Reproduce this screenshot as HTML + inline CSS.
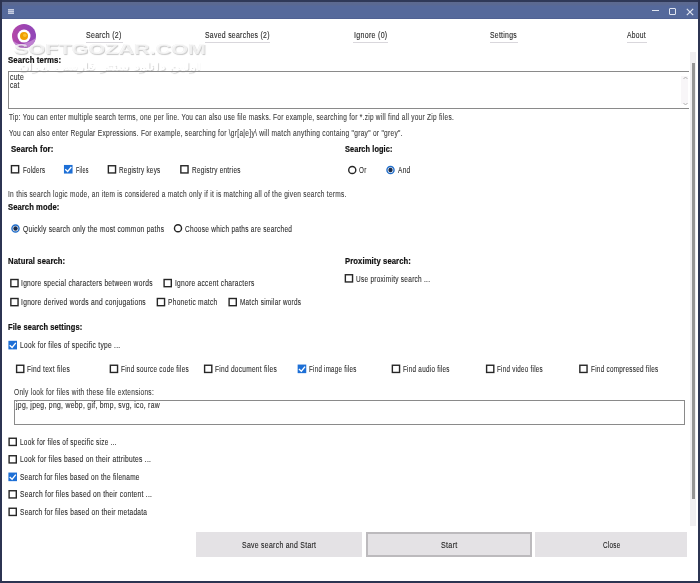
<!DOCTYPE html>
<html><head><meta charset="utf-8">
<style>
html,body{margin:0;padding:0;width:700px;height:583px;overflow:hidden;background:#fff;}
body{position:relative;font-family:"Liberation Sans",sans-serif;font-size:7.8px;}
.t{position:absolute;white-space:pre;line-height:10px;height:10px;transform-origin:0 0;font-size:8.3px;-webkit-text-stroke:0.1px currentColor;}
.cb{position:absolute;width:6.2px;height:6.2px;border:1.3px solid #2e2e2e;background:#fff;box-sizing:content-box;}
.cb.on{background:#1d6fd6;border-color:#1d6fd6;}
.cb svg{position:absolute;left:-1.3px;top:-1.3px;}
.rd{position:absolute;width:6.4px;height:6.4px;border:1.3px solid #2e2e2e;border-radius:50%;background:#fff;}
.rd.on{border-color:#1f6cc9;}
.rd i{position:absolute;left:1.6px;top:1.6px;width:3.4px;height:3.4px;border-radius:50%;background:#1f4f8a;}
.abs{position:absolute;}
</style></head><body>
<!-- window frame -->
<div class="abs" style="left:0;top:0;width:700px;height:2px;background:#2f3958"></div>
<div class="abs" style="left:0;top:2px;width:700px;height:16.5px;background:linear-gradient(#5d6a8f 0,#5a6992 2.5px,#55699b 4.5px,#55699b 15.5px,#4d5e8e 17px,#4a5a8a 18.5px)"></div>
<div class="abs" style="left:0;top:0;width:2px;height:583px;background:#2c3452"></div>
<div class="abs" style="left:697.5px;top:0;width:2.5px;height:583px;background:#2c3452"></div>
<div class="abs" style="left:0;top:580.5px;width:700px;height:2.5px;background:#2c3452"></div>
<!-- hamburger -->
<div class="abs" style="left:8px;top:8.6px;width:6px;height:5.5px;background:#c6cde0"></div>
<div class="abs" style="left:8px;top:10.3px;width:6px;height:0.7px;background:#9aa6c8"></div>
<div class="abs" style="left:8px;top:12.2px;width:6px;height:0.7px;background:#9aa6c8"></div>
<!-- window controls -->
<div class="abs" style="left:651.5px;top:10.3px;width:7px;height:1.2px;background:#e0e5f0"></div>
<div class="abs" style="left:669.2px;top:8.3px;width:4.8px;height:4.8px;border:1.1px solid #e0e5f0;border-radius:1px"></div>
<svg class="abs" style="left:686px;top:7.5px" width="8" height="8" viewBox="0 0 8 8"><path d="M0.8 0.8 L7.2 7.2 M7.2 0.8 L0.8 7.2" stroke="#e0e5f0" stroke-width="1.2"/></svg>
<!-- logo -->
<svg class="abs" style="left:11.6px;top:23.6px" width="24" height="24" viewBox="0 0 24 24">
<defs><linearGradient id="lg" x1="0" y1="0.5" x2="1" y2="0.5"><stop offset="0" stop-color="#b448a8"/><stop offset="0.5" stop-color="#9d44b2"/><stop offset="1" stop-color="#9148b8"/></linearGradient>
<clipPath id="ring"><path d="M12 0A12 12 0 1 0 12.01 0Z M12 5.6A6.5 6.5 0 1 1 11.99 5.6Z" clip-rule="evenodd"/></clipPath></defs>
<circle cx="12" cy="12" r="12" fill="url(#lg)"/>
<path d="M0 15.5 Q6 21.5 12 19.8 Q18 18 24 14 L24 24 L0 24Z" fill="#c58ad6" clip-path="url(#ring)" opacity="0.85"/>
<circle cx="12" cy="12.1" r="6.5" fill="#fff"/>
<circle cx="12" cy="12" r="4.0" fill="#f0a000"/>
<circle cx="12.8" cy="11.2" r="1.8" fill="#f8c030"/>
</svg>
<!-- watermark -->
<div class="abs" style="left:13.5px;top:40.5px;font-size:15px;font-weight:700;color:rgba(255,255,255,0.75);line-height:16px;white-space:nowrap;transform:scaleX(1.44);transform-origin:0 0;filter:blur(0.35px);text-shadow:0.6px 0.8px 0.8px rgba(0,0,0,0.22),-0.3px -0.3px 0.5px rgba(0,0,0,0.08)">SOFTGOZAR.COM</div>
<div class="abs" style="left:18px;top:60px;font-size:10px;font-weight:700;color:#fff;line-height:13px;white-space:nowrap;transform:scaleX(1.45);transform-origin:0 0;filter:blur(0.35px);text-shadow:0.5px 0.7px 0.8px rgba(0,0,0,0.18)">اولین دانلود سنتر فارسی ایران</div>
<!-- tab underlines -->
<div class="abs" style="left:85.5px;top:41.9px;width:37px;height:1px;background:#d9d7dc"></div>
<div class="abs" style="left:205px;top:41.9px;width:65px;height:1px;background:#d9d7dc"></div>
<div class="abs" style="left:353px;top:41.9px;width:35px;height:1px;background:#d9d7dc"></div>
<div class="abs" style="left:489.5px;top:41.9px;width:28px;height:1px;background:#d9d7dc"></div>
<div class="abs" style="left:627px;top:41.9px;width:19.5px;height:1px;background:#d9d7dc"></div>
<!-- search terms textarea -->
<div class="abs" style="left:8px;top:71px;width:680.5px;height:38px;border:1px solid #8a8a8a;border-right:0;box-sizing:border-box"></div>
<div class="abs" style="left:680.6px;top:76px;width:7.5px;height:28px;background:#f8f6f8"></div>
<svg class="abs" style="left:683px;top:75.5px" width="5" height="4"><path d="M0.5 3 L2.5 1 L4.5 3" stroke="#a8a8a8" fill="none" stroke-width="0.9"/></svg>
<svg class="abs" style="left:683px;top:101.5px" width="5" height="4"><path d="M0.5 1 L2.5 3 L4.5 1" stroke="#a8a8a8" fill="none" stroke-width="0.9"/></svg>
<!-- extensions textbox -->
<div class="abs" style="left:14.3px;top:400px;width:671.2px;height:24.5px;border:1px solid #8a8a8a;box-sizing:border-box"></div>
<!-- page scrollbar -->
<div class="abs" style="left:689.5px;top:52.4px;width:6.2px;height:473.4px;background:#f0eff1"></div>
<div class="abs" style="left:692.4px;top:62.6px;width:2.4px;height:436.3px;background:#959595"></div>
<!-- buttons -->
<div class="abs" style="left:195.7px;top:532px;width:166.6px;height:25.1px;background:#e4e2e5"></div>
<div class="abs" style="left:365.9px;top:532px;width:166.2px;height:25px;background:#e4e2e5;border:2px solid #bcbabd;box-sizing:border-box"></div>
<div class="abs" style="left:535.4px;top:532px;width:151.2px;height:25.3px;background:#e4e2e5"></div>
<div class="t" style="left:86.40px;top:29.92px;letter-spacing:0.35px;transform:scaleX(0.8429);color:#2a2a2a;-webkit-text-stroke:0.12px #2a2a2a">Search (2)</div>
<div class="t" style="left:205.00px;top:29.92px;letter-spacing:0.35px;transform:scaleX(0.8281);color:#2a2a2a;-webkit-text-stroke:0.12px #2a2a2a">Saved searches (2)</div>
<div class="t" style="left:353.50px;top:29.92px;letter-spacing:0.35px;transform:scaleX(0.8484);color:#2a2a2a;-webkit-text-stroke:0.12px #2a2a2a">Ignore (0)</div>
<div class="t" style="left:489.90px;top:29.92px;letter-spacing:0.35px;transform:scaleX(0.8236);color:#2a2a2a;-webkit-text-stroke:0.12px #2a2a2a">Settings</div>
<div class="t" style="left:627.00px;top:29.92px;letter-spacing:0.35px;transform:scaleX(0.8107);color:#2a2a2a;-webkit-text-stroke:0.12px #2a2a2a">About</div>
<div class="t" style="left:7.80px;top:55.02px;letter-spacing:0.1px;transform:scaleX(0.9393);font-weight:700;color:#111;-webkit-text-stroke:0.2px #111">Search terms:</div>
<div class="t" style="left:9.80px;top:72.32px;letter-spacing:0.35px;transform:scaleX(0.8307);color:#2c2c2c">cute</div>
<div class="t" style="left:9.80px;top:80.02px;letter-spacing:0.35px;transform:scaleX(0.8000);color:#2c2c2c">cat</div>
<div class="t" style="left:8.75px;top:111.52px;letter-spacing:0.35px;transform:scaleX(0.7846);color:#3c3c3c">Tip: You can enter multiple search terms, one per line. You can also use file masks. For example, searching for *.zip will find all your Zip files.</div>
<div class="t" style="left:8.75px;top:127.82px;letter-spacing:0.35px;transform:scaleX(0.7952);color:#3c3c3c">You can also enter Regular Expressions. For example, searching for \gr[a|e]y\ will match anything containg &quot;gray&quot; or &quot;grey&quot;.</div>
<div class="t" style="left:10.70px;top:143.72px;letter-spacing:0.1px;transform:scaleX(0.9442);font-weight:700;color:#111;-webkit-text-stroke:0.2px #111">Search for:</div>
<div class="t" style="left:344.50px;top:144.02px;letter-spacing:0.1px;transform:scaleX(0.8894);font-weight:700;color:#111;-webkit-text-stroke:0.2px #111">Search logic:</div>
<div class="t" style="left:22.60px;top:165.02px;letter-spacing:0.35px;transform:scaleX(0.7436);color:#2c2c2c">Folders</div>
<div class="t" style="left:75.70px;top:165.02px;letter-spacing:0.35px;transform:scaleX(0.6535);color:#2c2c2c">Files</div>
<div class="t" style="left:119.25px;top:165.02px;letter-spacing:0.35px;transform:scaleX(0.7637);color:#2c2c2c">Registry keys</div>
<div class="t" style="left:191.75px;top:165.02px;letter-spacing:0.35px;transform:scaleX(0.7708);color:#2c2c2c">Registry entries</div>
<div class="t" style="left:359.25px;top:165.02px;letter-spacing:0.35px;transform:scaleX(0.7559);color:#2c2c2c">Or</div>
<div class="t" style="left:397.50px;top:165.02px;letter-spacing:0.35px;transform:scaleX(0.7897);color:#2c2c2c">And</div>
<div class="t" style="left:8.30px;top:188.92px;letter-spacing:0.35px;transform:scaleX(0.7910);color:#3c3c3c">In this search logic mode, an item is considered a match only if it is matching all of the given search terms.</div>
<div class="t" style="left:7.90px;top:202.02px;letter-spacing:0.1px;transform:scaleX(0.9166);font-weight:700;color:#111;-webkit-text-stroke:0.2px #111">Search mode:</div>
<div class="t" style="left:22.50px;top:223.52px;letter-spacing:0.35px;transform:scaleX(0.7974);color:#2c2c2c">Quickly search only the most common paths</div>
<div class="t" style="left:184.50px;top:223.52px;letter-spacing:0.35px;transform:scaleX(0.7868);color:#2c2c2c">Choose which paths are searched</div>
<div class="t" style="left:8.25px;top:256.27px;letter-spacing:0.1px;transform:scaleX(0.9246);font-weight:700;color:#111;-webkit-text-stroke:0.2px #111">Natural search:</div>
<div class="t" style="left:344.50px;top:256.27px;letter-spacing:0.1px;transform:scaleX(0.9251);font-weight:700;color:#111;-webkit-text-stroke:0.2px #111">Proximity search:</div>
<div class="t" style="left:356.25px;top:274.02px;letter-spacing:0.35px;transform:scaleX(0.7808);color:#2c2c2c">Use proximity search ...</div>
<div class="t" style="left:21.25px;top:277.72px;letter-spacing:0.35px;transform:scaleX(0.8011);color:#2c2c2c">Ignore special characters between words</div>
<div class="t" style="left:175.00px;top:277.72px;letter-spacing:0.35px;transform:scaleX(0.7972);color:#2c2c2c">Ignore accent characters</div>
<div class="t" style="left:21.25px;top:297.22px;letter-spacing:0.35px;transform:scaleX(0.8039);color:#2c2c2c">Ignore derived words and conjugations</div>
<div class="t" style="left:168.00px;top:297.22px;letter-spacing:0.35px;transform:scaleX(0.7972);color:#2c2c2c">Phonetic match</div>
<div class="t" style="left:239.50px;top:297.22px;letter-spacing:0.35px;transform:scaleX(0.7661);color:#2c2c2c">Match similar words</div>
<div class="t" style="left:8.25px;top:322.02px;letter-spacing:0.1px;transform:scaleX(0.9017);font-weight:700;color:#111;-webkit-text-stroke:0.2px #111">File search settings:</div>
<div class="t" style="left:19.50px;top:339.82px;letter-spacing:0.35px;transform:scaleX(0.7995);color:#2c2c2c">Look for files of specific type ...</div>
<div class="t" style="left:27.00px;top:363.52px;letter-spacing:0.35px;transform:scaleX(0.7942);color:#2c2c2c">Find text files</div>
<div class="t" style="left:121.25px;top:363.52px;letter-spacing:0.35px;transform:scaleX(0.7692);color:#2c2c2c">Find source code files</div>
<div class="t" style="left:215.00px;top:363.52px;letter-spacing:0.35px;transform:scaleX(0.7889);color:#2c2c2c">Find document files</div>
<div class="t" style="left:308.75px;top:363.52px;letter-spacing:0.35px;transform:scaleX(0.7456);color:#2c2c2c">Find image files</div>
<div class="t" style="left:402.50px;top:363.52px;letter-spacing:0.35px;transform:scaleX(0.7613);color:#2c2c2c">Find audio files</div>
<div class="t" style="left:497.00px;top:363.52px;letter-spacing:0.35px;transform:scaleX(0.7547);color:#2c2c2c">Find video files</div>
<div class="t" style="left:590.50px;top:363.52px;letter-spacing:0.35px;transform:scaleX(0.7666);color:#2c2c2c">Find compressed files</div>
<div class="t" style="left:13.75px;top:387.02px;letter-spacing:0.35px;transform:scaleX(0.7912);color:#3c3c3c">Only look for files with these file extensions:</div>
<div class="t" style="left:16.00px;top:400.22px;letter-spacing:0.35px;transform:scaleX(0.8235);color:#2c2c2c">jpg, jpeg, png, webp, gif, bmp, svg, ico, raw</div>
<div class="t" style="left:19.50px;top:436.82px;letter-spacing:0.35px;transform:scaleX(0.7755);color:#2c2c2c">Look for files of specific size ...</div>
<div class="t" style="left:19.50px;top:454.32px;letter-spacing:0.35px;transform:scaleX(0.8053);color:#2c2c2c">Look for files based on their attributes ...</div>
<div class="t" style="left:19.50px;top:471.82px;letter-spacing:0.35px;transform:scaleX(0.7848);color:#2c2c2c">Search for files based on the filename</div>
<div class="t" style="left:19.50px;top:489.32px;letter-spacing:0.35px;transform:scaleX(0.8062);color:#2c2c2c">Search for files based on their content ...</div>
<div class="t" style="left:19.50px;top:506.82px;letter-spacing:0.35px;transform:scaleX(0.7898);color:#2c2c2c">Search for files based on their metadata</div>
<div class="t" style="left:242.30px;top:539.52px;letter-spacing:0.35px;transform:scaleX(0.8306);color:#222;-webkit-text-stroke:0.1px #222">Save search and Start</div>
<div class="t" style="left:440.70px;top:539.52px;letter-spacing:0.35px;transform:scaleX(0.8609);color:#222;-webkit-text-stroke:0.1px #222">Start</div>
<div class="t" style="left:602.80px;top:539.52px;letter-spacing:0.35px;transform:scaleX(0.7619);color:#222;-webkit-text-stroke:0.1px #222">Close</div>
<svg class="abs" style="left:0;top:0" width="700" height="583" viewBox="0 0 700 583">
<rect x="11.45" y="165.65" width="7.20" height="7.20" fill="#fff" stroke="#262626" stroke-width="1.4"/>
<rect x="63.95" y="164.95" width="8.60" height="8.60" fill="#1d6fd6"/>
<path d="M65.25 169.35 L67.65 171.55 L71.35 167.05" fill="none" stroke="#fff" stroke-width="1.35"/>
<rect x="108.35" y="165.75" width="7.20" height="7.20" fill="#fff" stroke="#262626" stroke-width="1.4"/>
<rect x="180.85" y="165.75" width="7.20" height="7.20" fill="#fff" stroke="#262626" stroke-width="1.4"/>
<rect x="345.35" y="274.75" width="7.20" height="7.20" fill="#fff" stroke="#262626" stroke-width="1.4"/>
<rect x="10.85" y="279.50" width="7.20" height="7.20" fill="#fff" stroke="#262626" stroke-width="1.4"/>
<rect x="164.10" y="279.50" width="7.20" height="7.20" fill="#fff" stroke="#262626" stroke-width="1.4"/>
<rect x="10.85" y="298.50" width="7.20" height="7.20" fill="#fff" stroke="#262626" stroke-width="1.4"/>
<rect x="157.35" y="298.50" width="7.20" height="7.20" fill="#fff" stroke="#262626" stroke-width="1.4"/>
<rect x="229.10" y="298.50" width="7.20" height="7.20" fill="#fff" stroke="#262626" stroke-width="1.4"/>
<rect x="8.40" y="340.80" width="8.60" height="8.60" fill="#1d6fd6"/>
<path d="M9.70 345.20 L12.10 347.40 L15.80 342.90" fill="none" stroke="#fff" stroke-width="1.35"/>
<rect x="16.60" y="365.25" width="7.20" height="7.20" fill="#fff" stroke="#262626" stroke-width="1.4"/>
<rect x="110.35" y="365.25" width="7.20" height="7.20" fill="#fff" stroke="#262626" stroke-width="1.4"/>
<rect x="204.60" y="365.25" width="7.20" height="7.20" fill="#fff" stroke="#262626" stroke-width="1.4"/>
<rect x="297.65" y="364.55" width="8.60" height="8.60" fill="#1d6fd6"/>
<path d="M298.95 368.95 L301.35 371.15 L305.05 366.65" fill="none" stroke="#fff" stroke-width="1.35"/>
<rect x="392.35" y="365.25" width="7.20" height="7.20" fill="#fff" stroke="#262626" stroke-width="1.4"/>
<rect x="486.60" y="365.25" width="7.20" height="7.20" fill="#fff" stroke="#262626" stroke-width="1.4"/>
<rect x="579.85" y="365.25" width="7.20" height="7.20" fill="#fff" stroke="#262626" stroke-width="1.4"/>
<rect x="9.10" y="438.25" width="7.20" height="7.20" fill="#fff" stroke="#262626" stroke-width="1.4"/>
<rect x="9.10" y="455.75" width="7.20" height="7.20" fill="#fff" stroke="#262626" stroke-width="1.4"/>
<rect x="8.40" y="472.55" width="8.60" height="8.60" fill="#1d6fd6"/>
<path d="M9.70 476.95 L12.10 479.15 L15.80 474.65" fill="none" stroke="#fff" stroke-width="1.35"/>
<rect x="9.10" y="490.75" width="7.20" height="7.20" fill="#fff" stroke="#262626" stroke-width="1.4"/>
<rect x="9.10" y="508.25" width="7.20" height="7.20" fill="#fff" stroke="#262626" stroke-width="1.4"/>
<circle cx="352.25" cy="170.00" r="3.55" fill="#fff" stroke="#262626" stroke-width="1.4"/>
<circle cx="390.50" cy="170.00" r="3.55" fill="#fff" stroke="#1f6cc9" stroke-width="1.4"/>
<circle cx="390.50" cy="170.00" r="2.2" fill="#1a2c4c"/>
<circle cx="15.50" cy="228.50" r="3.55" fill="#fff" stroke="#1f6cc9" stroke-width="1.4"/>
<circle cx="15.50" cy="228.50" r="2.2" fill="#1a2c4c"/>
<circle cx="178.00" cy="228.25" r="3.55" fill="#fff" stroke="#262626" stroke-width="1.4"/>
</svg>
</body></html>
